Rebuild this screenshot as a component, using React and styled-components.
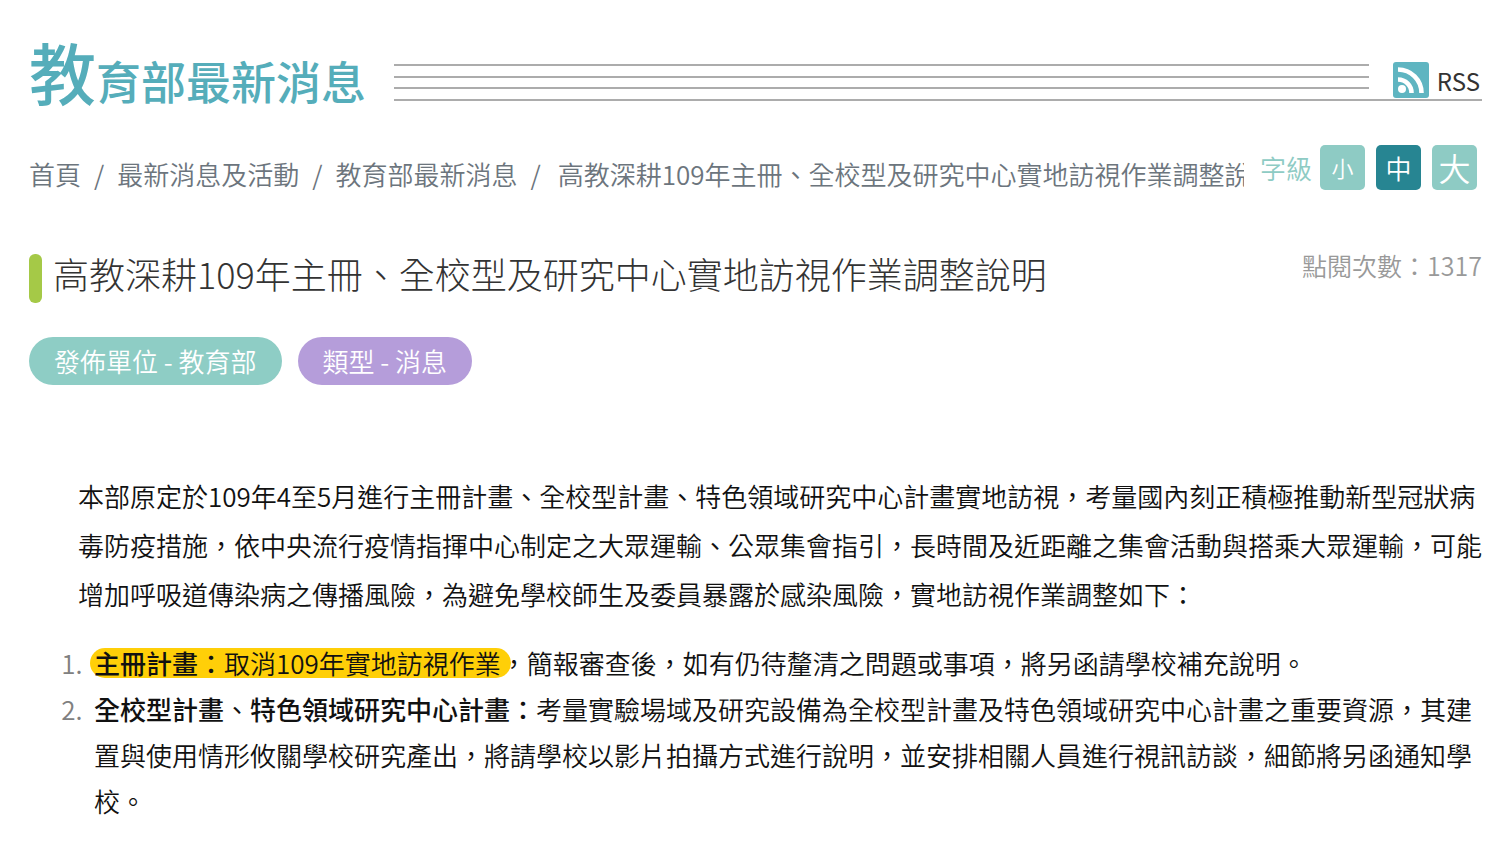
import React from "react";
import styled, { createGlobalStyle } from "styled-components";

const GlobalStyle = createGlobalStyle`
  * {
    box-sizing: border-box;
  }

  body {
    margin: 0;
    background-color: #fff;
    color: #111;
    font-family: "Noto Sans CJK TC", sans-serif;
    font-size: 26px;
    font-weight: 350;
  }
`;

const Page = styled.main`
  padding: 40px 30px 40px 29px;
`;

const Header = styled.header`
  display: flex;
  align-items: flex-end;
  gap: 28px;
  height: 61px;
`;

const SiteTitle = styled.h1`
  margin: 0 0 -10px;
  color: #55adba;
  font-size: 45px;
  font-weight: 500;
  line-height: 61px;
  white-space: nowrap;

  span {
    font-size: 67px;
    line-height: 61px;
  }
`;

const TitleRule = styled.div`
  flex: 1;
  display: flex;
  align-items: flex-end;
  gap: 24px;
  height: 37px;
  padding-right: 2px;
  border-bottom: 2px solid #acacac;
`;

const Lines = styled.div`
  flex: 1;
  display: flex;
  flex-direction: column;
  justify-content: space-between;
  height: 35px;
  padding-bottom: 10px;

  i {
    height: 2px;
    background-color: #acacac;
  }
`;

const RssLink = styled.a`
  display: flex;
  align-items: center;
  gap: 8px;
  height: 36px;
  margin-bottom: 1px;
  color: #333;
  font-size: 24px;
  font-weight: 400;
  text-decoration: none;
`;

const SubBar = styled.div`
  display: flex;
  justify-content: space-between;
  align-items: flex-start;
  gap: 16px;
  margin-top: 44px;
  padding-right: 5px;
`;

const Breadcrumb = styled.nav`
  flex: 1;
  overflow: hidden;
  color: #6c757d;
  line-height: 40px;
  margin-top: 9px;
  white-space: nowrap;

  ol {
    display: flex;
    margin: 0;
    padding: 0;
    list-style: none;
  }

  li + li::before {
    content: "/";
    padding: 0 13px;
  }

  li:last-child::before {
    padding-right: 17px;
  }

  a {
    color: inherit;
    text-decoration: none;
  }
`;

const FontSizes = styled.div`
  display: flex;
  align-items: center;
  gap: 11px;
  color: #8ecbc4;

  span {
    margin-right: -3px;
  }
`;

const SizeButton = styled.button`
  width: 45px;
  height: 45px;
  padding: 0;
  border: 0;
  border-radius: 5px;
  background-color: ${({ $active }) => ($active ? "#278592" : "#8ecbc4")};
  color: #fff;
  font-family: inherit;
  font-size: ${({ $size }) => $size}px;
  font-weight: 350;
  line-height: 45px;
`;

const ArticleHead = styled.div`
  display: flex;
  justify-content: space-between;
  align-items: flex-start;
  margin-top: 60px;
`;

const ArticleTitle = styled.h2`
  display: flex;
  gap: 11px;
  margin: 0;
  color: #333;
  font-size: 36px;
  font-weight: 300;
  line-height: 38px;

  &::before {
    content: "";
    width: 13px;
    height: 49px;
    border-radius: 6px;
    background-color: #a5c947;
  }
`;

const Views = styled.span`
  color: #999;
  font-size: 25px;
  line-height: 22px;
  white-space: nowrap;
`;

const Tags = styled.div`
  display: flex;
  gap: 16px;
  margin-top: 34px;
`;

const Tag = styled.span`
  padding: 0 25px;
  border-radius: 24px;
  background-color: ${({ $color }) => $color};
  color: #fff;
  line-height: 48px;
`;

const Content = styled.article`
  margin-top: 86px;

  p {
    margin: 0 0 0 49px;
    line-height: 49px;
  }

  ol {
    margin: 22px 0 0;
    padding-left: 65px;
    line-height: 46px;
  }

  li::marker {
    content: counter(list-item) ".\\00a0\\00a0";
    color: #808080;
  }

  strong {
    font-weight: 500;
  }
`;

const Highlight = styled.mark`
  display: inline-block;
  height: 30px;
  margin: 0 -10px 0 -4px;
  padding: 0 10px 0 4px;
  border-radius: 15px;
  background-color: #ffcf08;
  color: inherit;
  line-height: 30px;
`;

const RssIcon = () => (
  <svg width="36" height="36" viewBox="0 0 36 36" aria-hidden="true">
    <rect width="36" height="36" rx="3" fill="#5fb5c1" />
    <circle cx="9" cy="27" r="4" fill="#fff" />
    <path
      d="M5 17.5a13.5 13.5 0 0 1 13.5 13.5M5 7.5a23.5 23.5 0 0 1 23.5 23.5"
      fill="none"
      stroke="#fff"
      strokeWidth="4.6"
    />
  </svg>
);

const sizes = [
  { label: "小", size: 22 },
  { label: "中", size: 26, active: true },
  { label: "大", size: 32 },
];

const App = () => {
  return (
    <>
      <GlobalStyle />
      <Page lang="zh-Hant">
        <Header>
          <SiteTitle>
            <span>教</span>育部最新消息
          </SiteTitle>
          <TitleRule>
            <Lines>
              <i />
              <i />
              <i />
            </Lines>
            <RssLink href="#rss">
              <RssIcon />
              RSS
            </RssLink>
          </TitleRule>
        </Header>

        <SubBar>
          <Breadcrumb>
            <ol>
              <li>
                <a href="#home">首頁</a>
              </li>
              <li>
                <a href="#news">最新消息及活動</a>
              </li>
              <li>
                <a href="#moe">教育部最新消息</a>
              </li>
              <li>高教深耕109年主冊、全校型及研究中心實地訪視作業調整說明</li>
            </ol>
          </Breadcrumb>
          <FontSizes>
            <span>字級</span>
            {sizes.map(({ label, size, active }) => (
              <SizeButton key={label} type="button" $size={size} $active={active}>
                {label}
              </SizeButton>
            ))}
          </FontSizes>
        </SubBar>

        <ArticleHead>
          <ArticleTitle>
            高教深耕109年主冊、全校型及研究中心實地訪視作業調整說明
          </ArticleTitle>
          <Views>點閱次數：1317</Views>
        </ArticleHead>

        <Tags>
          <Tag $color="#8ecdc5">發佈單位 - 教育部</Tag>
          <Tag $color="#b59dda">類型 - 消息</Tag>
        </Tags>

        <Content>
          <p>
            本部原定於109年4至5月進行主冊計畫、全校型計畫、特色領域研究中心計畫實地訪視，考量國內刻正積極推動新型冠狀病毒防疫措施，依中央流行疫情指揮中心制定之大眾運輸、公眾集會指引，長時間及近距離之集會活動與搭乘大眾運輸，可能增加呼吸道傳染病之傳播風險，為避免學校師生及委員暴露於感染風險，實地訪視作業調整如下：
          </p>
          <ol>
            <li>
              <Highlight>
                <strong>主冊計畫：</strong>取消109年實地訪視作業
              </Highlight>
              ，簡報審查後，如有仍待釐清之問題或事項，將另函請學校補充說明。
            </li>
            <li>
              <strong>全校型計畫</strong>、<strong>特色領域研究中心計畫：</strong>
              考量實驗場域及研究設備為全校型計畫及特色領域研究中心計畫之重要資源，其建置與使用情形攸關學校研究產出，將請學校以影片拍攝方式進行說明，並安排相關人員進行視訊訪談，細節將另函通知學校。
            </li>
          </ol>
        </Content>
      </Page>
    </>
  );
};

export default App;
